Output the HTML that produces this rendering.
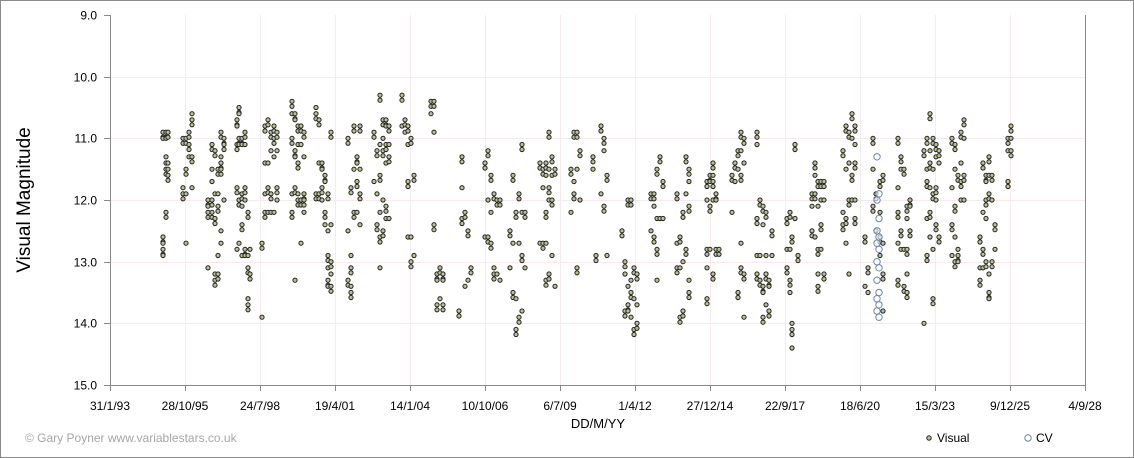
<!DOCTYPE html>
<html><head><meta charset="utf-8"><style>
html,body{margin:0;padding:0;background:#fff;}
svg{display:block;font-family:"Liberation Sans",sans-serif;}
</style></head><body>
<svg id="s" width="1134" height="458" xmlns="http://www.w3.org/2000/svg">
<rect x="0.5" y="0.5" width="1133" height="457" fill="#fff" stroke="#8a8a8a"/>
<g id="grid" stroke="#f7eaee" stroke-width="1"></g>
<g stroke="#8a8a8a" fill="none">
<path d="M110.5 15V385.5H1085.5V15"/>
</g>
<g id="ax" font-size="12" fill="#000"></g>
<text x="598" y="428" font-size="13" text-anchor="middle">DD/M/YY</text>
<text transform="translate(30,200) rotate(-90)" font-size="19" text-anchor="middle">Visual Magnitude</text>
<text x="25" y="442" font-size="12" fill="#a6a6a6">© Gary Poyner www.variablestars.co.uk</text>
<circle cx="929" cy="438" r="2.2" fill="#b9c196" stroke="#222" stroke-width="1"/>
<text x="937" y="442" font-size="12">Visual</text>
<circle cx="1028" cy="438" r="3.2" fill="#fff" stroke="#6a84b5" stroke-width="1"/>
<text x="1036" y="442" font-size="12">CV</text>
<g id="pts"></g>
</svg>
<script>
var NS="http://www.w3.org/2000/svg";
function el(t,a,p,txt){var e=document.createElementNS(NS,t);for(var k in a)e.setAttribute(k,a[k]);if(txt)e.textContent=txt;document.getElementById(p).appendChild(e);return e;}
function Y(m){return 15+(m-9)*61.667;}
var labels=["31/1/93","28/10/95","24/7/98","19/4/01","14/1/04","10/10/06","6/7/09","1/4/12","27/12/14","22/9/17","18/6/20","15/3/23","9/12/25","4/9/28"];
for(var i=0;i<14;i++){var x=110+i*75;
 if(i>0&&i<13)el("line",{x1:x+.5,y1:15,x2:x+.5,y2:385},"grid");
 el("line",{x1:x+.5,y1:385,x2:x+.5,y2:391,stroke:"#8a8a8a"},"ax");
 el("text",{x:x,y:410,"text-anchor":"middle"},"ax",labels[i]);}
for(var m=9;m<=15;m++){var y=Math.round(Y(m))+.5;
 if(m>9&&m<15)el("line",{x1:110,y1:y,x2:1085,y2:y},"grid");
 el("line",{x1:104,y1:y,x2:110,y2:y,stroke:"#8a8a8a"},"ax");
 el("text",{x:97,y:y+4,"text-anchor":"end"},"ax",m.toFixed(1));}
var D=[[163,[10.9,11.0,12.6,12.7,12.8,12.9]],[166,[10.9,11.0,12.2,11.3,11.5,11.4]],[168,[10.9,11.4,11.6,11.5]],[183,[11.0,11.8,11.9]],[186,[11.0,12.7,11.5,11.9]],[189,[10.9,11.3,11.1]],[192,[10.7,10.6,11.3,11.8]],[208,[12.0,12.1,12.2,13.1]],[212,[11.1,11.7,12.2,11.5,12.0]],[215,[11.2,11.9,12.3,13.2,13.3]],[218,[11.5,11.9,12.1,12.9,13.2]],[221,[10.9,11.3,11.4,12.7,11.5,12.5]],[224,[11.0,12.0,11.1]],[237,[10.7,10.8,11.8,12.8,11.1]],[239,[10.5,10.6,11.0,11.1,12.0,12.7]],[242,[11.0,11.1,11.9,12.1,12.4,12.9]],[245,[10.9,11.1,11.8,12.0,12.8,12.9]],[248,[12.2,12.9,13.1,13.6,13.7]],[250,[13.2,12.8]],[262,[12.7,13.9]],[265,[10.8,11.9,12.2,11.4]],[268,[10.7,11.4,11.8,12.2]],[271,[10.9,11.2,11.9,12.2]],[274,[10.8,11.3,11.0,12.2]],[277,[10.9,11.2,11.8,12.0]],[292,[10.4,10.6,11.0,11.9,12.2]],[295,[10.6,10.7,11.2,11.3,11.8,13.3]],[298,[10.8,11.1,11.4,11.9,12.0]],[301,[10.8,11.1,12.0,12.7]],[304,[10.9,11.3,11.9,12.2,12.0]],[316,[10.6,10.5,11.9]],[319,[10.7,11.4,11.9]],[322,[11.4,11.5,11.8,12.0]],[325,[11.6,11.7,12.2,12.4]],[328,[11.9,12.5,12.9,13.1,13.3,13.4]],[331,[10.9,12.4,13.0,13.2,13.4]],[348,[11.0,12.5,13.3]],[351,[11.8,12.9,13.1,13.4,13.5]],[354,[10.8,11.5,12.2]],[357,[11.3,11.4,11.7,12.2]],[360,[10.8,11.5,11.9,12.4]],[374,[10.9,11.7]],[377,[11.2,11.9,12.4]],[380,[10.3,11.1,11.6,12.2,12.6,13.1]],[383,[10.7,11.0,11.2,12.0,12.5]],[386,[10.7,10.8,11.1,11.4,12.1,12.3]],[389,[10.8,11.1,11.3,12.3]],[402,[10.3,10.8]],[405,[10.7,10.9]],[408,[10.8,11.1,11.7,12.6]],[411,[11.0,12.6,13.0]],[414,[11.6,12.9]],[431,[10.4,10.6]],[434,[10.4,10.9,12.4]],[437,[13.2,13.3,13.7]],[440,[13.1,13.6]],[443,[13.2,13.3,13.7]],[459,[13.8]],[462,[11.3,11.8,12.3]],[465,[12.2,13.4]],[468,[12.5,13.3]],[471,[13.1]],[485,[11.4,12.6]],[488,[11.2,12.0,12.6]],[491,[11.6,12.2,12.7]],[494,[11.9,13.1,13.2]],[497,[12.0,13.2]],[500,[12.0,13.3]],[510,[12.5,13.1]],[513,[11.6,12.7,13.5]],[516,[12.2,13.6,14.1]],[519,[11.9,12.7,13.9]],[522,[11.1,12.2,12.9,13.8]],[525,[12.2,13.1]],[540,[11.4,12.7]],[543,[11.5,11.8,12.7]],[546,[11.4,11.6,12.2,12.7,13.3]],[549,[10.9,11.5,11.8,12.0,13.2]],[552,[11.3,11.6,12.0,12.9]],[555,[11.5,13.4]],[571,[11.5,12.2]],[574,[10.9,11.7,11.9]],[577,[10.9,11.5,13.1]],[580,[11.2,12.0]],[593,[11.3,11.5]],[596,[12.9]],[601,[10.8,11.9]],[604,[11.0,11.2,12.1]],[607,[11.6,12.9]],[622,[12.5]],[625,[13.0,13.2,13.8]],[628,[12.0,13.4,13.7,13.8]],[631,[12.0,13.3,13.5,13.9]],[634,[13.1,13.6,14.1]],[637,[13.2,13.7,14.0]],[651,[11.9,12.5]],[654,[11.9,12.1,12.6]],[657,[11.5,12.3,12.8,13.3]],[660,[11.3,12.3]],[663,[11.7,12.3]],[677,[11.9,12.7,13.1]],[680,[12.6,13.1,13.9]],[683,[12.2,13.0,13.8]],[686,[11.3,11.9,12.8]],[689,[11.5,11.7,12.1,13.3,13.5]],[707,[11.7,12.0,12.8,13.1,13.6]],[710,[11.6,11.7,12.1,12.8]],[713,[11.4,11.6,11.7,12.0,13.2]],[716,[11.9,12.0,12.8]],[719,[12.8]],[732,[11.6,12.2]],[735,[11.4,11.7]],[738,[11.2,11.5,13.5]],[741,[10.9,11.2,11.6,12.7,13.1]],[744,[11.0,11.4,13.2,13.9]],[757,[10.9,11.1,12.3,12.9,13.2]],[760,[12.0,12.9,13.3]],[763,[12.1,12.4,13.4,13.5,13.9]],[766,[12.2,12.9,13.2,13.7]],[769,[13.3,13.4,13.8]],[772,[12.5,12.9]],[787,[12.3,12.8,13.1]],[790,[12.2,12.8,13.3,13.5]],[792,[12.6,14.0,14.1,14.4]],[795,[11.1,12.3]],[798,[12.9]],[812,[11.9,12.1,12.5]],[815,[11.4,11.6,11.9,12.6]],[818,[11.7,12.1,12.8,13.2,13.4]],[821,[11.7,12.0,12.4,12.8]],[824,[11.7,12.0,13.2]],[843,[11.2,12.2,12.4]],[846,[10.8,11.5,12.3,12.7]],[849,[10.9,11.4,12.0,13.2]],[852,[10.6,11.0,11.6,12.0]],[855,[10.8,11.1,11.4,12.0,12.3]],[865,[12.6,13.4]],[868,[13.1,13.5]],[873,[11.0,11.5,12.1]],[876,[11.9,12.5]],[880,[11.7,12.2,12.6,12.9]],[883,[11.6,12.7,13.2,13.8]],[898,[11.0,11.8,12.2,12.7,13.3]],[901,[11.3,11.5,12.5,12.8]],[904,[11.5,12.8,13.4]],[907,[12.1,12.3,12.8,13.2,13.5]],[910,[12.0,12.1,12.5]],[924,[11.2,14.0]],[927,[11.0,11.5,11.7,12.3,12.9]],[930,[10.6,11.2,11.4,11.8,12.2,12.6]],[933,[11.0,11.5,11.9,12.8,13.6]],[936,[11.1,11.3,11.8,12.0,12.4]],[939,[11.2,11.4,12.6]],[952,[11.0,11.8,12.4,12.9]],[955,[11.1,11.5,12.1,12.6,13.0]],[958,[11.6,12.8,12.9,13.0]],[961,[10.9,11.4,11.7,12.0]],[964,[10.7,11.0,11.6,12.0]],[980,[12.6,13.1,13.3]],[983,[11.4,12.2,12.8,13.1]],[986,[11.6,11.7,12.0,12.3,13.0]],[989,[11.3,11.6,11.9,13.2,13.5,13.6]],[992,[11.6,12.0,13.0]],[995,[12.4,12.8]],[1008,[11.0,11.2,11.7]],[1011,[10.8,11.0,11.2]]];
D.forEach(function(c){c[1].forEach(function(m,j){
 el("circle",{cx:c[0],cy:Y(m).toFixed(1),r:2.1,fill:"#b9c196",stroke:"#222","stroke-width":1},"pts");
 if(j%2==0)el("circle",{cx:c[0],cy:(Y(m)+5).toFixed(1),r:2.1,fill:"#b9c196",stroke:"#222","stroke-width":1},"pts");
});});
[11.3,11.9,12.0,12.3,12.5,12.6,12.7,12.8,13.0,13.1,13.3,13.5,13.6,13.7,13.8,13.9].forEach(function(m,j){
 el("circle",{cx:878+(j%2?1:-1),cy:Y(m).toFixed(1),r:3.2,fill:"#fff","fill-opacity":0.6,stroke:"#6a84b5","stroke-width":1},"pts");});
</script>
</body></html>
